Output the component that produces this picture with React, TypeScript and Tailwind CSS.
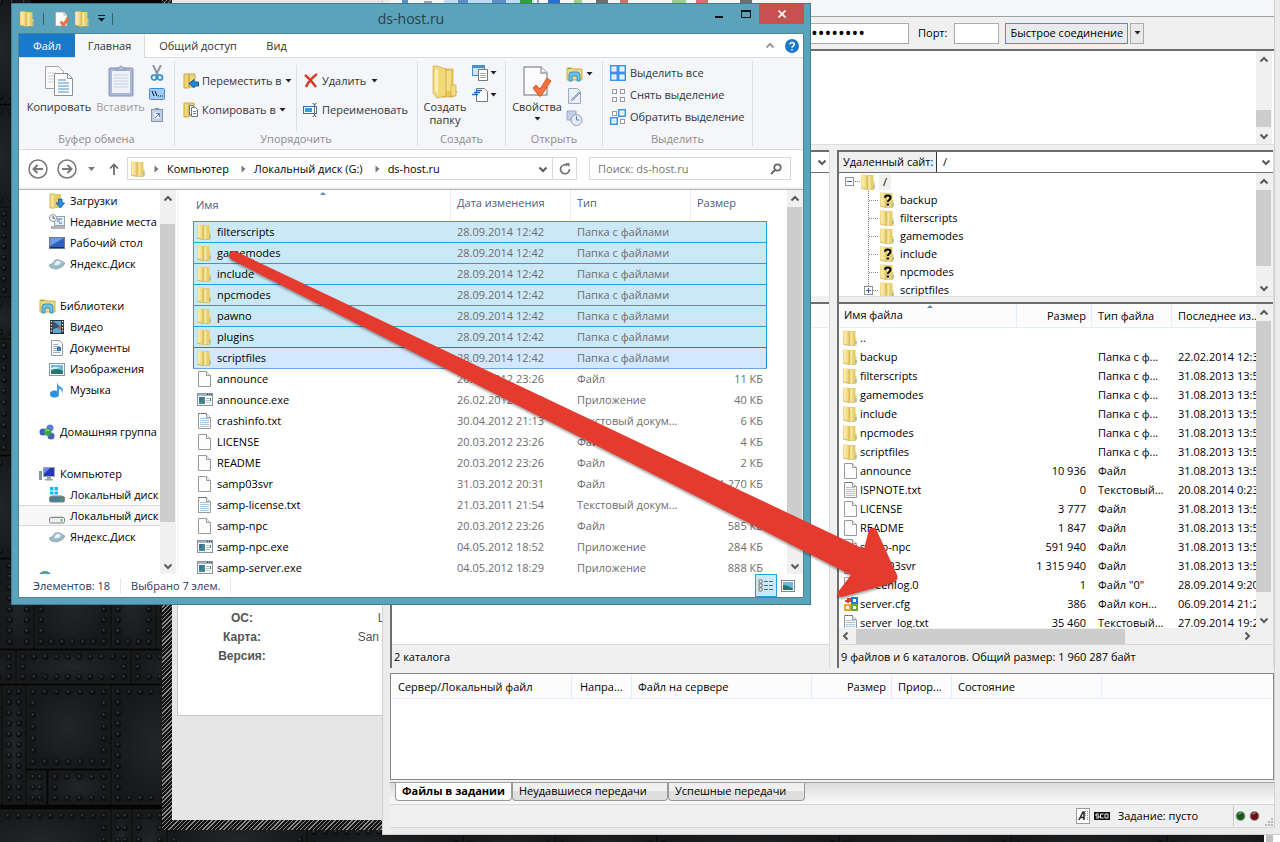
import React from 'react';
import clsx from 'clsx';

/* ---------- data ---------- */

type IconKind = 'folder' | 'file' | 'text' | 'exe' | 'cfg';

interface LocalFile {
  name: string;
  date: string;
  type: string;
  size: string;
  icon: IconKind;
}

const localFiles: LocalFile[] = [
  ...['filterscripts', 'gamemodes', 'include', 'npcmodes', 'pawno', 'plugins', 'scriptfiles'].map((name) => ({
    name,
    date: '28.09.2014 12:42',
    type: 'Папка с файлами',
    size: '',
    icon: 'folder' as IconKind,
  })),
  { name: 'announce', date: '20.03.2012 23:26', type: 'Файл', size: '11 КБ', icon: 'file' },
  { name: 'announce.exe', date: '26.02.2012 19:50', type: 'Приложение', size: '40 КБ', icon: 'exe' },
  { name: 'crashinfo.txt', date: '30.04.2012 21:13', type: 'Текстовый докум...', size: '6 КБ', icon: 'text' },
  { name: 'LICENSE', date: '20.03.2012 23:26', type: 'Файл', size: '4 КБ', icon: 'file' },
  { name: 'README', date: '20.03.2012 23:26', type: 'Файл', size: '2 КБ', icon: 'file' },
  { name: 'samp03svr', date: '31.03.2012 20:31', type: 'Файл', size: '1 270 КБ', icon: 'file' },
  { name: 'samp-license.txt', date: '21.03.2011 21:54', type: 'Текстовый докум...', size: '12 КБ', icon: 'text' },
  { name: 'samp-npc', date: '20.03.2012 23:26', type: 'Файл', size: '585 КБ', icon: 'file' },
  { name: 'samp-npc.exe', date: '04.05.2012 18:52', type: 'Приложение', size: '284 КБ', icon: 'exe' },
  { name: 'samp-server.exe', date: '04.05.2012 18:29', type: 'Приложение', size: '888 КБ', icon: 'exe' },
];

const remoteFiles: [string, string, string, string, IconKind][] = [
  ['..', '', '', '', 'folder'],
  ['backup', '', 'Папка с ф...', '22.02.2014 12:34', 'folder'],
  ['filterscripts', '', 'Папка с ф...', '31.08.2013 13:54', 'folder'],
  ['gamemodes', '', 'Папка с ф...', '31.08.2013 13:54', 'folder'],
  ['include', '', 'Папка с ф...', '31.08.2013 13:54', 'folder'],
  ['npcmodes', '', 'Папка с ф...', '31.08.2013 13:54', 'folder'],
  ['scriptfiles', '', 'Папка с ф...', '31.08.2013 13:54', 'folder'],
  ['announce', '10 936', 'Файл', '31.08.2013 13:54', 'file'],
  ['ISPNOTE.txt', '0', 'Текстовый...', '20.08.2014 0:23', 'text'],
  ['LICENSE', '3 777', 'Файл', '31.08.2013 13:54', 'file'],
  ['README', '1 847', 'Файл', '31.08.2013 13:54', 'file'],
  ['samp-npc', '591 940', 'Файл', '31.08.2013 13:54', 'file'],
  ['samp03svr', '1 315 940', 'Файл', '31.08.2013 13:54', 'file'],
  ['screenlog.0', '1', 'Файл "0"', '28.09.2014 9:20', 'file'],
  ['server.cfg', '386', 'Файл кон...', '06.09.2014 21:24', 'cfg'],
  ['server_log.txt', '35 460', 'Текстовый...', '27.09.2014 19:21', 'text'],
];

// x, y, width, height of the metal plates on the wallpaper
const plates: number[][] = [
  [-30, -4, 60, 107], [-30, 106, 60, 100], [-30, 208, 40, 88], [-30, 298, 60, 40],
  [-30, 340, 40, 114], [-30, 457, 60, 100], [-30, 560, 33, 88],
  [4, 560, 29, 88], [35, 560, 75, 88], [112, 560, 43, 88], [157, 560, 60, 88],
  [-40, 651, 55, 32], [17, 651, 113, 32], [132, 651, 90, 32],
  [-20, 686, 21, 118], [3, 686, 22, 118], [27, 686, 83, 82], [112, 686, 90, 118],
  [27, 771, 19, 33], [49, 771, 61, 33],
  [-30, 810, 140, 60], [112, 810, 19, 60], [133, 810, 33, 60], [168, 810, 138, 60],
  [308, 826, 154, 60], [464, 826, 90, 60], [556, 826, 100, 60], [658, 826, 180, 60],
  [840, 826, 170, 60], [1012, 826, 154, 60], [1168, 826, 100, 60],
];

/* ---------- icons ---------- */

const FolderIcon = ({ question = false }: { question?: boolean }) => (
  <svg width="16" height="16" viewBox="0 0 16 16" className="shrink-0">
    <path d="M6 1h6.500v14H6z" fill="#e6cd69" />
    <path d="M6.500 2h3v13h-3z" fill="#f5e6a0" />
    <path d="M0 .5h5.500L7.500 2v14L0 14z" fill="#f0d983" />
    <path d="M1 1h2.500v13L1 13.500z" fill="#f8e9a8" />
    <path d="M5.500 1l1.500 1v13l-1.500-.5z" fill="#d9bb58" />
    <path d="M10.500 8H13.500v7h-3z" fill="#ebce66" />
    <path d="M0 14l7.500 2 6-1" stroke="#c9a640" strokeWidth=".7" fill="none" />
    <path d="M12.500 11h1v3h-1z" fill="#5ab0e6" />
    {question && (
      <path d="M5 5.800c0-3 5.500-3 5.500 0 0 2-2.600 2-2.600 4.200M6.800 12.400h2.200" stroke="#000" strokeWidth="2" fill="none" />
    )}
  </svg>
);

const FileIcon = ({ lines = false }: { lines?: boolean }) => (
  <svg width="16" height="16" viewBox="0 0 16 16" className="shrink-0">
    <path d="M1.500.5h8l4 4v11h-12z" fill="#fdfdfd" stroke="#9a9a9a" />
    <path d="M9.500.5v4h4" fill="#eee" stroke="#9a9a9a" />
    {lines && <path d="M3 5.500h9M3 7.500h9M3 9.500h9M3 11.500h9M3 13.500h9" stroke="#a9c6da" />}
    {lines && <path d="M2 .5h8" stroke="#555" strokeDasharray="1 1" />}
  </svg>
);

const ExeIcon = () => (
  <svg width="16" height="16" viewBox="0 0 16 16" className="shrink-0">
    <rect x=".5" y="1.500" width="15" height="12" fill="#fff" stroke="#8593a3" />
    <path d="M1 3h14" stroke="#a9b5c3" strokeWidth="2" />
    <path d="M10 2.500h1M12 2.500h1M14 2.500h1" stroke="#333" />
    <rect x="2" y="5" width="6" height="7" fill="#3f8a86" />
    <rect x="2" y="5" width="3" height="4" fill="#3f68a4" />
    <path d="M9 6.500h4M9 8.500h4M9 10.500h4" stroke="#b5bfc9" />
    <path d="M13.500 6v3" stroke="#2a9a60" />
  </svg>
);

const CfgIcon = () => (
  <svg width="16" height="16" viewBox="0 0 16 16" className="shrink-0" fill="none" strokeWidth="2">
    <path d="M2 5h5V2M5 2v5" stroke="#d8432a" />
    <path d="M9 2h5v5H9z" stroke="#2f78c4" />
    <path d="M2 9h5v5H2z" stroke="#e9a81e" />
    <path d="M9 9h5v5H9z" stroke="#6ea82c" />
  </svg>
);

const KindIcon = ({ kind }: { kind: IconKind }) => {
  if (kind === 'folder') return <FolderIcon />;
  if (kind === 'exe') return <ExeIcon />;
  if (kind === 'cfg') return <CfgIcon />;
  return <FileIcon lines={kind === 'text'} />;
};

const Caret = () => (
  <svg width="7" height="4" viewBox="0 0 7 4" className="shrink-0">
    <path d="M.5 0h6L3.500 3.500z" fill="#222" />
  </svg>
);

const chevrons = {
  up: 'M1.500 6.500L5 3l3.500 3.500',
  down: 'M1.500 3.500L5 7l3.500-3.500',
  left: 'M6.500 1.500L3 5l3.500 3.500',
  right: 'M3.500 1.500L7 5 3.500 8.500',
};

const Chevron = ({ dir, light = false }: { dir: keyof typeof chevrons; light?: boolean }) => (
  <svg width="10" height="10" viewBox="0 0 10 10" fill="none" className="shrink-0">
    <path d={chevrons[dir]} stroke={light ? '#999' : '#5a5a5a'} strokeWidth="2" />
  </svg>
);

const Crumb = () => (
  <svg width="5" height="8" viewBox="0 0 5 8" className="shrink-0">
    <path d="M.5 0.500v7L4.500 4z" fill="#777" />
  </svg>
);

const CheckPage = ({ size }: { size: number }) => (
  <svg width={size} height={size} viewBox="0 0 32 32" className="shrink-0">
    <path d="M3 2h17l6 6v22H3z" fill="#fcfcfd" stroke="#9a9ca0" strokeWidth="1.400" />
    <path d="M20 2v6h6" fill="#eef0f2" stroke="#9a9ca0" strokeWidth="1.400" />
    <path d="M12 23l3-3 4 4 7-11 4 3-10 15h-2z" fill="#ef7440" stroke="#d85a28" />
  </svg>
);

const LibraryIcon = () => (
  <svg width="17" height="16" viewBox="0 0 17 16" className="shrink-0">
    <path d="M1 2h5l1 1h9v11H1z" fill="#f0d780" stroke="#d1ae4c" />
    <path d="M2 2.500h3" stroke="#5cb43c" />
    <path d="M3 15V9q0-3 3-3h5q3 0 3 3v6h-3v-5H6v5z" fill="#6cc0e8" stroke="#3b93c4" />
  </svg>
);

const DownloadsIcon = () => (
  <svg width="17" height="16" viewBox="0 0 17 16" className="shrink-0">
    <path d="M1 1h5v14H1z" fill="#f6e394" stroke="#d3b24f" />
    <path d="M6 1h6v14H6z" fill="#e7cb68" />
    <path d="M9.500 6h3.500v4h2.500L11.300 15 7 10h2.500z" fill="#2f8fdc" stroke="#1a6bb0" />
  </svg>
);

const RecentIcon = () => (
  <svg width="17" height="16" viewBox="0 0 17 16" className="shrink-0">
    <rect x="5.500" y="2.500" width="10" height="9" fill="#e8eef2" stroke="#97a3ad" />
    <path d="M8 5h5M8 7h3M10 9h3" stroke="#3b82b8" />
    <path d="M2 12h14v3H2z" fill="#aeb4b9" />
    <circle cx="4" cy="4" r="3.500" fill="#f8fafb" stroke="#8a97a3" />
    <path d="M4 2v2.200h2" stroke="#555" fill="none" />
  </svg>
);

const DesktopIcon = () => (
  <svg width="17" height="16" viewBox="0 0 17 16" className="shrink-0">
    <rect x=".5" y="2.500" width="15" height="11" fill="#2f60c4" stroke="#6d7a8c" />
    <path d="M1 3h14L1 11z" fill="#6a9be8" />
    <path d="M1 12.500h14" stroke="#17305e" />
  </svg>
);

const DiskCloudIcon = () => (
  <svg width="17" height="16" viewBox="0 0 17 16" className="shrink-0">
    <path d="M0 9q4-1 6-5 3-1 5 0l5 3q-1 4-8 6-7 0-8-4z" fill="#9dbac8" stroke="#7f9dab" strokeWidth=".6" />
    <path d="M5 9q2-5 5-4 3 1 1 3-3 2-6 1z" fill="#e6f1f5" />
  </svg>
);

const VideoIcon = () => (
  <svg width="17" height="16" viewBox="0 0 17 16" className="shrink-0">
    <rect x="1" y="1" width="14" height="14" fill="#2c3136" />
    <path d="M2.500 2v12M13.500 2v12" stroke="#d8dde0" strokeWidth="1.500" strokeDasharray="1.500 1.500" />
    <rect x="4" y="2" width="8" height="12" fill="#5aa6d8" />
    <path d="M4 2l8 6-8 2z" fill="#3a5068" />
    <path d="M12 6v5l-4-2z" fill="#b06a3a" />
  </svg>
);

const DocsIcon = () => (
  <svg width="17" height="16" viewBox="0 0 17 16" className="shrink-0">
    <path d="M2.500.5h8l3 3v12h-11z" fill="#fdfdfd" stroke="#8f9aa5" />
    <path d="M4 4.500h5M4 6.500h7M4 8.500h4M4 10.500h4M4 12.500h7" stroke="#9ab0c4" />
    <path d="M8 7h4v4H8z" fill="#3b78b8" />
  </svg>
);

const PictureIcon = () => (
  <svg width="17" height="16" viewBox="0 0 17 16" className="shrink-0">
    <rect x=".5" y="2.500" width="15" height="12" fill="#fff" stroke="#8a97a3" />
    <rect x="2" y="4" width="12" height="9" fill="#6fb8e6" />
    <path d="M2 10q5-4 12 0v3H2z" fill="#23796a" />
    <path d="M2 7q5-2 9 0-4 1-9 1z" fill="#e8f4fa" />
  </svg>
);

const MusicIcon = () => (
  <svg width="17" height="16" viewBox="0 0 17 16" className="shrink-0">
    <ellipse cx="5.500" cy="12" rx="4.500" ry="3.500" fill="#2d90d8" />
    <path d="M8 12V0q1 4 4 5t1 7q0-5-3-5v5z" fill="#3f9fe0" />
  </svg>
);

const HomegroupIcon = () => (
  <svg width="17" height="16" viewBox="0 0 17 16" className="shrink-0">
    <circle cx="4" cy="8" r="3.500" fill="#3e5fc8" />
    <circle cx="11" cy="4" r="3.500" fill="#5d7fdc" />
    <circle cx="12" cy="12" r="3.500" fill="#4a62b8" />
    <circle cx="8.500" cy="8" r="3.700" fill="#3da648" />
    <path d="M6.500 7q2-2 3.500-.5" stroke="#c8f0c8" fill="none" />
  </svg>
);

const ComputerIcon = () => (
  <svg width="17" height="16" viewBox="0 0 17 16" className="shrink-0">
    <rect x="4.500" y="1.500" width="11" height="9" fill="#2337b8" stroke="#a0a7ae" />
    <path d="M5 2h6L5 8z" fill="#6c8af0" />
    <path d="M8 11h4v2h2v1.500H6V13h2z" fill="#9aa1a8" />
    <rect x="0" y="5" width="3" height="9" fill="#8c959d" />
    <path d="M1 6v3" stroke="#54c04a" />
  </svg>
);

const DriveIcon = ({ system = false }: { system?: boolean }) => (
  <svg width="17" height="16" viewBox="0 0 17 16" className="shrink-0">
    {system && <path d="M1 0h3.500v3.500H1zM5.500 0H9v3.500H5.500zM1 4.500h3.500v3H1zM5.500 4.500H9v3H5.500z" fill="#12b7f0" />}
    <path d="M3 8h10l3 3H0z" fill={system ? '#b9c0c6' : '#dcdcdc'} />
    <rect x=".5" y="9.500" width="15" height="5.500" rx="1.500" fill={system ? '#4c7f94' : '#efefef'} stroke="#7f858a" />
    <path d="M12.500 11v2.500" stroke="#49b33f" strokeWidth="1.500" />
  </svg>
);

const GlobeIcon = () => (
  <svg width="17" height="16" viewBox="0 0 17 16" className="shrink-0">
    <circle cx="6" cy="7" r="7" fill="#3d8fd0" />
    <path d="M3 2q3-2 5 0l-2 3z" fill="#56b85a" />
  </svg>
);

const SquaresIcon = ({ mode }: { mode: 'all' | 'none' | 'invert' }) => (
  <svg width="16" height="16" viewBox="0 0 16 16" className="shrink-0">
    {[[0, 0], [8, 0], [0, 8], [8, 8]].map(([x, y], i) => {
      const on = mode === 'all' || (mode === 'invert' && (i === 1 || i === 2));
      return on ? (
        <g key={i}>
          <rect x={x} y={y} width="8" height="8" fill="#3b94ec" />
          <rect x={x + 2} y={y + 2} width="4" height="4" fill="#d3e8fc" stroke="#fff" />
        </g>
      ) : (
        <rect key={i} x={x + 2.5} y={y + 2.5} width="4" height="4" fill="#fff" stroke="#999" />
      );
    })}
  </svg>
);

/* ---------- shared parts ---------- */

const VScroll = ({ thumb }: { thumb: string }) => (
  <div className="flex w-4 shrink-0 flex-col bg-[#f0f0f0]">
    <button type="button" aria-label="Вверх" className="flex h-[17px] shrink-0 items-center justify-center">
      <Chevron dir="up" />
    </button>
    <div className={clsx('mr-px bg-[#cdcdcd]', thumb)} />
    <button type="button" aria-label="Вниз" className="mt-auto flex h-[17px] shrink-0 items-center justify-center">
      <Chevron dir="down" />
    </button>
  </div>
);

const Wallpaper = () => (
  <svg className="absolute inset-0 h-full w-full" aria-hidden="true">
    <defs>
      <radialGradient id="plate">
        <stop offset="0" stopColor="#232628" />
        <stop offset="1" stopColor="#16181a" />
      </radialGradient>
    </defs>
    <rect width="100%" height="100%" fill="#050505" />
    {plates.map(([x, y, w, h], i) => {
      const nx = Math.max(1, Math.round((w - 13) / 11));
      const ny = Math.max(1, Math.round((h - 13) / 11));
      const dots: number[][] = [];
      for (let k = 0; k <= nx; k++) {
        const cx = x + 6 + (k * (w - 12)) / nx;
        dots.push([cx, y + 6], [cx, y + h - 6]);
      }
      for (let k = 1; k < ny; k++) {
        const cy = y + 6 + (k * (h - 12)) / ny;
        dots.push([x + 6, cy], [x + w - 6, cy]);
      }
      return (
        <g key={i}>
          <rect x={x} y={y} width={w} height={h} fill="url(#plate)" stroke="#1c1e1f" strokeWidth="1" />
          {dots.map(([cx, cy], k) => (
            <g key={k}>
              <circle cx={cx} cy={cy} r="3" fill="#0d0e0f" />
              <circle cx={cx - 0.3} cy={cy - 0.5} r="1.8" fill="#1d2022" />
              <circle cx={cx - 0.5} cy={cy - 1} r=".8" fill="#45494b" />
            </g>
          ))}
        </g>
      );
    })}
  </svg>
);

const BrowserPage = () => (
  <div className="absolute left-[162px] right-4 top-0 bg-[repeating-linear-gradient(135deg,#8c8c8c_0px,#8c8c8c_1px,#141414_1px,#141414_3px)] pb-2.5 pl-2.5">
    <div className="bg-[#e6e6e6] pb-[104px] pl-[5px] pt-[30px]">
      <dl className="grid grid-cols-[128px_172px] border border-[#c8c8c8] bg-white pb-[49px] pt-[578px] text-center font-['Liberation_Sans',sans-serif] text-xs leading-[19px] text-[#555]">
        <dt className="font-bold">ОС:</dt>
        <dd>Linux</dd>
        <dt className="font-bold">Карта:</dt>
        <dd>San Andreas</dd>
        <dt className="font-bold">Версия:</dt>
        <dd />
      </dl>
    </div>
  </div>
);

/* ---------- ftp client ---------- */

const tree: [string, boolean][] = [
  ['backup', true],
  ['filterscripts', false],
  ['gamemodes', false],
  ['include', true],
  ['npcmodes', true],
  ['scriptfiles', false],
];

const RemoteTree = () => (
  <div className="flex h-[123px] overflow-hidden bg-white">
    <ul className="flex-1 pl-1.5">
      <li className="flex h-[18px] items-center">
        <svg width="16" height="10" viewBox="0 0 16 10" className="shrink-0">
          <rect x=".5" y=".5" width="8" height="8" fill="#fff" stroke="#919191" />
          <path d="M2 4.500h5" stroke="#3b5ba8" />
          <path d="M10 4.500h6" stroke="#888" strokeDasharray="1 1" />
        </svg>
        <FolderIcon />
        <span className="ml-0.5 bg-[#f0f0f0] px-1">/</span>
      </li>
      {tree.map(([name, question], i) => {
        const last = i === tree.length - 1;
        return (
          <li key={name} className="flex h-[18px] items-center pl-[18px]">
            <svg width="17" height="18" viewBox="0 0 17 18" className="shrink-0">
              <path d={last ? 'M5.500 0v6' : 'M5.500 0v18'} stroke="#888" strokeDasharray="1 1" />
              <path d="M6 9.500h10" stroke="#888" strokeDasharray="1 1" />
              {last && <rect x="1.500" y="5.500" width="8" height="8" fill="#fff" stroke="#919191" />}
              {last && <path d="M3 9.500h5M5.500 7v5" stroke="#3b5ba8" />}
            </svg>
            <FolderIcon question={question} />
            <span className="ml-1">{name}</span>
          </li>
        );
      })}
    </ul>
    <VScroll thumb="h-[76px]" />
  </div>
);

const RemoteList = () => (
  <div className="flex h-[324px] overflow-hidden bg-white">
    <div className="min-w-0 flex-1">
      <table className="w-full table-fixed border-separate border-spacing-0 whitespace-nowrap text-left">
        <colgroup>
          <col />
          <col className="w-[75px]" />
          <col className="w-20" />
          <col className="w-[84px]" />
        </colgroup>
        <thead>
          <tr className="h-6 bg-[#fcfcfc]">
            <th className="border-b border-r border-[#e3eefa] p-0 pl-[5px] font-normal">
              <div className="flex flex-col">
                <svg width="6" height="3" viewBox="0 0 6 3" className="self-center"><path d="M0 3h6L3 0z" fill="#5a8cab" /></svg>
                <span className="-mt-px pb-1">Имя файла</span>
              </div>
            </th>
            <th className="border-b border-r border-[#e3eefa] p-0 pr-[5px] text-right font-normal">Размер</th>
            <th className="border-b border-r border-[#e3eefa] p-0 pl-1.5 font-normal">Тип файла</th>
            <th className="overflow-hidden border-b border-[#e3eefa] p-0 pl-1.5 font-normal">Последнее из...</th>
          </tr>
        </thead>
        <tbody>
          {remoteFiles.map(([name, size, type, date, icon]) => (
            <tr key={name} className="h-[19px]">
              <td className="p-0 pl-1">
                <div className="flex h-[19px] items-center gap-px">
                  <KindIcon kind={icon} />
                  <span>{name}</span>
                </div>
              </td>
              <td className="p-0 pr-1.5 text-right">{size}</td>
              <td className="p-0 pl-1.5">{type}</td>
              <td className="overflow-hidden p-0 pl-1.5">{date}</td>
            </tr>
          ))}
        </tbody>
      </table>
    </div>
    <VScroll thumb="h-[271px]" />
  </div>
);

const FtpClient = () => (
  <div className="absolute left-[382px] right-0 top-0 border-b border-l border-[#d0d0d0] bg-[#ebebeb] pb-1.5 pl-[7px] pr-[5px] font-['Open_Sans',sans-serif] text-[11px] leading-4 text-black">
    <div className="border-r border-[#d0d0d0] bg-[#f0f0f0]">
      {/* toolbar, mostly covered by the window in front */}
      <div className="h-[17px] border-b border-[#a0a0a0] bg-[#f4f6f9]">
        <svg width="380" height="4" viewBox="0 0 380 4">
          <path d="M54 0h90v4H54z" fill="#bfdcf5" />
          <path d="M34 2h8M148 0v3" stroke="#555" />
          <path d="M12 0h6v4h-6zM68 0h10v4H68zM102 0h14v4h-14z" fill="#5b8fc9" />
          <path d="M130 0h12v3h-12z" fill="#2fa32f" />
          <path d="M158 0h12v3h-12z" fill="#2c6fd0" />
          <path d="M184 0h8v4h-8zM282 0h14v4h-14z" fill="#9ad08c" />
          <path d="M206 0h12v4h-12zM350 0h12v4h-12z" fill="#6e6e6e" />
          <path d="M230 0h8v4h-8zM306 0h12v4h-12z" fill="#d9706a" />
        </svg>
      </div>
      <form className="flex h-8 items-center pl-[416px]">
        <input
          type="password"
          aria-label="Пароль"
          defaultValue="xxxxxxxx"
          className="h-[21px] w-[103px] border border-[#ababab] bg-white pl-1 text-lg leading-[19px]"
        />
        <label htmlFor="port" className="ml-[9px]">Порт:</label>
        <input id="port" className="ml-[7px] h-[21px] w-[45px] border border-[#ababab] bg-white" />
        <button type="button" className="ml-1.5 h-[21px] w-[123px] whitespace-nowrap border border-[#4a90e2] bg-[#e9e9e9]">
          Быстрое соединение
        </button>
        <button type="button" aria-label="История соединений" className="ml-0.5 flex h-[21px] w-3.5 items-center justify-center border border-[#ababab] bg-[#e9e9e9]">
          <Caret />
        </button>
      </form>
      <div className="flex h-24 justify-end border-b border-t-2 border-b-[#dcdcdc] border-t-[#6e6e6e] bg-white pr-0.5">
        <VScroll thumb="mt-[42px] h-[17px]" />
      </div>

      <div className="mt-[5px] flex gap-[7px]">
        {/* local side */}
        <div className="flex w-[440px] shrink-0 flex-col border-l-2 border-r border-l-[#6e6e6e] border-r-[#dcdcdc]">
          <div className="flex h-[23px] items-center justify-end border-b border-t-2 border-[#6e6e6e] bg-white pr-0.5">
            <Chevron dir="down" />
          </div>
          <div className="h-[123px] bg-white" />
          <div className="mt-1.5 h-[26px] border-b border-t-2 border-b-[#e3eefa] border-t-[#6e6e6e] bg-[#fcfcfc]" />
          <div className="flex-1 bg-white" />
          <div className="flex h-6 items-center border-t border-[#d8d8d8] pl-0.5">2 каталога</div>
        </div>
        {/* remote side */}
        <div className="min-w-0 flex-1 border-l-2 border-r border-l-[#6e6e6e] border-r-[#dcdcdc]">
          <div className="flex h-[23px] border-b border-t-2 border-[#6e6e6e] bg-white">
            <label htmlFor="remote" className="flex w-[98px] shrink-0 items-center whitespace-nowrap border-r border-[#333] bg-[#f0f0f0] pl-1">
              Удаленный сайт:
            </label>
            <select id="remote" className="min-w-0 flex-1 appearance-none pl-1.5">
              <option>/</option>
            </select>
            <span className="flex items-center pr-0.5">
              <Chevron dir="down" />
            </span>
          </div>
          <div className="border-b border-[#dcdcdc] pr-px">
            <RemoteTree />
          </div>
          <div className="mt-[5px] border-t-2 border-[#6e6e6e] pr-px">
            <RemoteList />
          </div>
          <div className="flex h-4 items-center bg-[#f0f0f0] pl-0.5">
            <Chevron dir="left" />
            <div className="ml-[5px] h-[15px] w-[269px] bg-[#cdcdcd]" />
            <span className="ml-auto mr-[21px] flex">
              <Chevron dir="right" />
            </span>
          </div>
          <div className="flex h-6 items-center border-t border-[#d8d8d8] pl-0.5">
            9 файлов и 6 каталогов. Общий размер: 1 960 287 байт
          </div>
        </div>
      </div>

      {/* transfer queue */}
      <div className="mt-[5px] h-[107px] border border-[#828790] bg-white p-px">
        <table className="w-full table-fixed border-separate border-spacing-0 text-left">
          <colgroup>
            <col className="w-[180px]" />
            <col className="w-[60px]" />
            <col className="w-[180px]" />
            <col className="w-20" />
            <col className="w-[60px]" />
            <col className="w-[150px]" />
            <col />
          </colgroup>
          <thead>
            <tr className="h-6 whitespace-nowrap bg-[#fcfcfc]">
              <th className="border-b border-r border-[#e3eefa] pl-1.5 font-normal">Сервер/Локальный файл</th>
              <th className="border-b border-r border-[#e3eefa] pl-2 font-normal">Напра...</th>
              <th className="border-b border-r border-[#e3eefa] pl-1.5 font-normal">Файл на сервере</th>
              <th className="border-b border-r border-[#e3eefa] pr-[5px] text-right font-normal">Размер</th>
              <th className="border-b border-r border-[#e3eefa] pl-1.5 font-normal">Приор...</th>
              <th className="border-b border-r border-[#e3eefa] pl-1.5 font-normal">Состояние</th>
              <th className="border-b border-[#e3eefa]" />
            </tr>
          </thead>
        </table>
      </div>
      <div className="mt-0.5 flex h-[22px] border-t border-[#a0a0a0] bg-gradient-to-b from-[#dcdcdc] to-[#fafafa] pl-[5px]">
        <button type="button" className="h-[18px] w-[117px] whitespace-nowrap rounded-b border border-t-0 border-[#999] bg-white pb-1 font-bold">
          Файлы в задании
        </button>
        <button type="button" className="h-[18px] w-[156px] rounded-b border border-t-0 border-[#999] bg-gradient-to-b from-[#f0f0f0] from-50% to-[#dfdfdf] to-50% pb-1 pl-1.5 text-left">
          Неудавшиеся передачи
        </button>
        <button type="button" className="h-[18px] w-[137px] rounded-b border border-t-0 border-[#999] bg-gradient-to-b from-[#f0f0f0] from-50% to-[#dfdfdf] to-50% pb-1 pl-1.5 text-left">
          Успешные передачи
        </button>
      </div>
      <div className="flex h-6 items-center justify-end border-b border-t border-[#d5d5d5]">
        <svg width="14" height="16" viewBox="0 0 14 16">
          <rect x=".5" y=".5" width="13" height="15" fill="#fff" stroke="#9a9a9a" />
          <path d="M3 12L7 4h1v8M5 9.500h3" stroke="#222" strokeWidth="1.500" fill="none" />
          <path d="M9.500 3v6M11.500 3v9" stroke="#888" strokeDasharray="1 1" />
        </svg>
        <svg width="16" height="8" viewBox="0 0 16 8" className="ml-1">
          <rect width="16" height="8" fill="#111" />
          <path d="M5 2H2v2h3v2H2M9.500 2h-3v4h3M11 2h3v4h-3V2" stroke="#eee" fill="none" />
        </svg>
        <span className="ml-2">Задание: пусто</span>
        <svg width="41" height="20" viewBox="0 0 41 20" className="ml-[35px]">
          <path d="M.5 0v20" stroke="#c4c4c4" />
          <circle cx="7.500" cy="10" r="4.500" fill="#155a18" stroke="#a5a5a5" />
          <circle cx="21.500" cy="10" r="4.500" fill="#6e0d12" stroke="#a5a5a5" />
          <path d="M5.500 8.500q1-2 3-1.500M19.500 8.500q1-2 3-1.500" stroke="#b9c7b9" fill="none" />
          <path d="M38 12h2v2h-2zM35 15h2v2h-2zM38 15h2v2h-2zM32 18h2v2h-2zM35 18h2v2h-2zM38 18h2v2h-2z" fill="#b5b5b5" />
        </svg>
      </div>
    </div>
  </div>
);

/* ---------- explorer window ---------- */

const TitleBar = () => (
  <div className="grid h-[29px] grid-cols-[1fr_auto_1fr]">
    <div className="flex items-center gap-[5px] pl-0.5">
      <FolderIcon />
      <span className="ml-0.5 h-3 w-px bg-[#36606e]" />
      <span className="ml-[5px] flex">
        <CheckPage size={16} />
      </span>
      <FolderIcon />
      <svg width="7" height="7" viewBox="0 0 7 7" className="ml-0.5">
        <path d="M0 .5h7" stroke="#111" />
        <path d="M0 3h7L3.500 6.500z" fill="#111" />
      </svg>
      <span className="ml-0.5 h-3 w-px bg-[#36606e]" />
    </div>
    <h1 className="self-center text-sm text-[#2d4048]">ds-host.ru</h1>
    <div className="flex items-start justify-end">
      <button type="button" aria-label="Свернуть" className="flex h-5 w-7 items-center justify-center">
        <svg width="8" height="10" viewBox="0 0 8 10"><path d="M0 8h8" stroke="#111" strokeWidth="2" /></svg>
      </button>
      <button type="button" aria-label="Развернуть" className="flex h-5 w-[26px] items-center justify-center">
        <svg width="10" height="8" viewBox="0 0 10 8"><path d="M.5 1h9v6.500h-9z" fill="none" stroke="#111" /><path d="M0 1h10" stroke="#111" strokeWidth="2" /></svg>
      </button>
      <button type="button" aria-label="Закрыть" className="flex h-5 w-[45px] items-center justify-center bg-[#c75050]">
        <svg width="8" height="8" viewBox="0 0 8 8"><path d="M.5 .5l7 7M7.500 .5l-7 7" stroke="#fff" strokeWidth="1.700" /></svg>
      </button>
    </div>
  </div>
);

const RibbonGroup = ({ title, className, children }: { title: string; className: string; children: React.ReactNode }) => (
  <section className={clsx('my-[3px] flex flex-col border-r border-[#dedfe1]', className)}>
    <div className="flex flex-1 pt-1">{children}</div>
    <h2 className="h-[15px] text-center text-[#8c8c8c]">{title}</h2>
  </section>
);

const Ribbon = () => (
  <div className="flex h-[92px] border-b border-[#dadbdc] bg-[#f4f6f9] text-[#333]">
    <RibbonGroup title="Буфер обмена" className="w-[156px]">
      <button type="button" className="flex w-20 flex-col items-center">
        <svg width="30" height="32" viewBox="0 0 30 32">
          <path d="M1.500 1.500h13l5 5v17h-18z" fill="#fbfbfb" stroke="#a3a3a3" />
          <path d="M4 8h8M4 11h8M4 14h8M4 17h8" stroke="#c9cdd3" />
          <path d="M10.500 8.500h13l5 5v17h-18z" fill="#fdfdfd" stroke="#8f8f8f" />
          <path d="M23.500 8.500v5h5" fill="none" stroke="#8f8f8f" />
          <path d="M14 15h8M14 18h11M14 21h11M14 24h11M14 27h11" stroke="#4a90c8" />
        </svg>
        <span className="mt-0.5">Копировать</span>
      </button>
      <button type="button" className="flex w-[43px] flex-col items-center text-[#9b9b9b]">
        <svg width="26" height="32" viewBox="0 0 26 32">
          <rect x="1" y="3" width="24" height="28" rx="1" fill="#a9b8d4" stroke="#8494b5" />
          <rect x="4" y="6" width="18" height="22" fill="#edf1f8" />
          <path d="M6 10h14M6 13h14M6 16h14M6 19h14M6 22h14" stroke="#c9d4e6" />
          <path d="M8 5V3h3q2-4 4 0h3v2z" fill="#b9c4d8" stroke="#8494b5" />
        </svg>
        <span className="mt-0.5">Вставить</span>
      </button>
      <div className="ml-[7px] flex flex-col items-center gap-1.5">
        <svg width="16" height="17" viewBox="0 0 16 17">
          <path d="M4 0l5 10M12 0L7 10" stroke="#8a96a6" strokeWidth="2" />
          <circle cx="5" cy="12.500" r="2.500" fill="none" stroke="#2a8fd0" strokeWidth="1.700" />
          <circle cx="11" cy="12.500" r="2.500" fill="none" stroke="#2a8fd0" strokeWidth="1.700" />
        </svg>
        <svg width="16" height="13" viewBox="0 0 16 13">
          <rect x=".5" y=".5" width="15" height="11" rx="1" fill="#9fcdf8" stroke="#3d8fdc" />
          <path d="M3 3l2 5M6 3l2 5M9 8h1M11 8h1M13 8h1" stroke="#111" />
        </svg>
        <svg width="14" height="15" viewBox="0 0 14 15">
          <rect x="1.500" y="2.500" width="11" height="12" fill="#c3cfe2" stroke="#8494b5" />
          <path d="M4.500 5.500h5v6h-5z" fill="#f4f7fb" />
          <path d="M5 11l4-4M6 6.500h3.500V10" stroke="#5f76a8" fill="none" />
          <path d="M5 2h4" stroke="#8494b5" strokeWidth="2" />
        </svg>
      </div>
    </RibbonGroup>

    <RibbonGroup title="Упорядочить" className="w-[243px]">
      <div className="flex w-[122px] flex-col gap-[11px] border-r border-[#dedfe1] pl-2 pt-[7px]">
        <button type="button" className="flex h-[18px] items-center gap-[3px] whitespace-nowrap">
          <svg width="16" height="16" viewBox="0 0 16 16" className="shrink-0">
            <path d="M1 1h5v14H1zM6 1h6v13H6z" fill="#efd678" stroke="#cdaa48" />
            <path d="M6 10.500l5-4v2.500h4.500v4H11v2z" fill="#2586d0" stroke="#14609e" />
          </svg>
          Переместить в <Caret />
        </button>
        <button type="button" className="flex h-[18px] items-center gap-[3px] whitespace-nowrap">
          <svg width="16" height="16" viewBox="0 0 16 16" className="shrink-0">
            <path d="M1 1h5v14H1zM6 1h5v13H6z" fill="#efd678" stroke="#cdaa48" />
            <path d="M6.500 3.500h4v9h-4z" fill="#fff" stroke="#777" />
            <path d="M8.500 5.500h4l2 2v7h-6z" fill="#fff" stroke="#777" />
            <path d="M10 9.500h3M10 11.500h3" stroke="#4a90c8" />
          </svg>
          Копировать в <Caret />
        </button>
      </div>
      <div className="flex flex-col gap-[11px] pl-1.5 pt-[7px]">
        <button type="button" className="flex h-[18px] items-center gap-[3px]">
          <svg width="16" height="16" viewBox="0 0 16 16" className="shrink-0">
            <path d="M2 2q5 4 11 12M14 1Q6 7 3 14" stroke="#d23a22" strokeWidth="2.400" fill="none" />
          </svg>
          Удалить <span className="ml-0.5 flex"><Caret /></span>
        </button>
        <button type="button" className="flex h-[18px] items-center gap-[3px]">
          <svg width="16" height="16" viewBox="0 0 16 16" className="shrink-0">
            <rect x=".5" y="4.500" width="13" height="7" fill="#fff" stroke="#3a6ea8" />
            <path d="M2 6h7v4H2z" fill="#3a9ae0" />
            <path d="M9.500 1.500q2 0 2 1.500v10q0 1.500-2 1.500M13.500 1.500q-2 0-2 1.500M11.500 13q0 1.500 2 1.500" stroke="#666" fill="none" />
          </svg>
          Переименовать
        </button>
      </div>
    </RibbonGroup>

    <RibbonGroup title="Создать" className="w-[88px]">
      <button type="button" className="flex w-[54px] flex-col items-center leading-[13px]">
        <svg width="28" height="34" viewBox="0 0 28 34">
          <path d="M13 4h9v20l4 3-4 5H10z" fill="#ecc955" stroke="#c79f35" strokeWidth=".6" />
          <path d="M14 6h6v20h-6z" fill="#f3dd85" />
          <path d="M2 1h4l9 3v27l-9 2-4-5z" fill="#f3d877" stroke="#c79f35" strokeWidth=".6" />
          <path d="M4 4l3 1v24l-3-3z" fill="#fbefb6" />
          <path d="M20 20h5v11h-5z" fill="#f4dc84" stroke="#c79f35" strokeWidth=".6" />
        </svg>
        <span className="mt-px w-12">Создать папку</span>
      </button>
      <div className="flex flex-col gap-1.5">
        <button type="button" aria-label="Создать элемент" className="flex items-center gap-px">
          <svg width="17" height="16" viewBox="0 0 17 16">
            <rect x=".5" y=".5" width="12" height="10" fill="#cfe6f8" stroke="#4a90c8" />
            <path d="M1 2h12" stroke="#4a90c8" strokeWidth="2" />
            <path d="M6.500 4.500h9v11h-9z" fill="#fff" stroke="#777" />
            <path d="M8 8.500h6M8 10.500h6M8 12.500h6" stroke="#aaa" />
          </svg>
          <Caret />
        </button>
        <button type="button" aria-label="Простой доступ" className="flex items-center gap-px">
          <svg width="17" height="16" viewBox="0 0 17 16">
            <path d="M4.500 1.500h8l3 3v10h-11z" fill="#fff" stroke="#777" />
            <path d="M4 3.500h6M2 5.500h6M0 7.500h6" stroke="#1e6fd0" strokeWidth="1.500" />
          </svg>
          <Caret />
        </button>
      </div>
    </RibbonGroup>

    <RibbonGroup title="Открыть" className="w-[97px]">
      <button type="button" className="ml-0.5 flex w-[58px] flex-col items-center gap-0.5">
        <CheckPage size={32} />
        Свойства
        <Caret />
      </button>
      <div className="flex flex-col gap-1.5 pt-px">
        <button type="button" aria-label="Открыть" className="flex items-center gap-[3px]">
          <LibraryIcon />
          <Caret />
        </button>
        <svg width="17" height="16" viewBox="0 0 17 16">
          <path d="M2.500.5h9l3 3v12h-12z" fill="#e9eef7" stroke="#9aaac6" />
          <path d="M5 12l8-8 1 1-7 7z" fill="#a9b8d4" stroke="#8c9cbc" />
        </svg>
        <svg width="17" height="16" viewBox="0 0 17 16">
          <path d="M1 1h9v9H1z" fill="#c3cfe2" stroke="#9aaac6" />
          <circle cx="10.500" cy="10" r="5.500" fill="#e3eaf5" stroke="#8c9cbc" />
          <path d="M10.500 6v4h3" stroke="#6e80a8" fill="none" />
        </svg>
      </div>
    </RibbonGroup>

    <RibbonGroup title="Выделить" className="w-[150px]">
      <div className="flex flex-col gap-1.5 whitespace-nowrap pl-[7px]">
        <button type="button" className="flex items-center gap-1"><SquaresIcon mode="all" />Выделить все</button>
        <button type="button" className="flex items-center gap-1"><SquaresIcon mode="none" />Снять выделение</button>
        <button type="button" className="flex items-center gap-1"><SquaresIcon mode="invert" />Обратить выделение</button>
      </div>
    </RibbonGroup>
  </div>
);

const AddressRow = () => (
  <div className="flex h-[39px] items-center border-b-2 border-[#f2f2f2] pl-[9px] pr-3">
    <button type="button" aria-label="Назад">
      <svg width="20" height="20" viewBox="0 0 20 20" fill="none" stroke="#777">
        <circle cx="10" cy="10" r="9" strokeWidth="1.500" />
        <path d="M5.500 10H15M9.500 6l-4 4 4 4" strokeWidth="2" />
      </svg>
    </button>
    <button type="button" aria-label="Вперед" className="ml-[9px]">
      <svg width="20" height="20" viewBox="0 0 20 20" fill="none" stroke="#777">
        <circle cx="10" cy="10" r="9" strokeWidth="1.500" />
        <path d="M5 10h9.500M10.500 6l4 4-4 4" strokeWidth="2" />
      </svg>
    </button>
    <svg width="7" height="4" viewBox="0 0 7 4" className="ml-[11px]"><path d="M0 0h7L3.500 4z" fill="#777" /></svg>
    <button type="button" aria-label="На уровень вверх" className="ml-[13px]">
      <svg width="12" height="12" viewBox="0 0 12 12" fill="none" stroke="#666" strokeWidth="1.700"><path d="M6 12V1.500M2 5.500l4-4 4 4" /></svg>
    </button>
    <div className="ml-[7px] flex h-[23px] flex-1 items-center border border-[#d9d9d9] pl-[3px]">
      <FolderIcon />
      <span className="ml-[7px]"><Crumb /></span>
      <button type="button" className="ml-2">Компьютер</button>
      <span className="ml-3"><Crumb /></span>
      <button type="button" className="ml-2">Локальный диск (G:)</button>
      <span className="ml-3"><Crumb /></span>
      <button type="button" className="ml-2">ds-host.ru</button>
      <span className="ml-auto mr-1"><Chevron dir="down" /></span>
      <button type="button" aria-label="Обновить" className="flex h-[21px] w-6 items-center justify-center border-l border-[#d9d9d9]">
        <svg width="12" height="12" viewBox="0 0 12 12" fill="none"><path d="M8.500 2.500A4.500 4.500 0 1 0 10.500 6" stroke="#777" strokeWidth="1.700" /><path d="M6.500 0h4v4z" fill="#777" /></svg>
      </button>
    </div>
    <label className="ml-3 flex h-[23px] w-[202px] items-center border border-[#d9d9d9] px-2">
      <input aria-label="Поиск" placeholder="Поиск: ds-host.ru" className="min-w-0 flex-1 outline-none placeholder:text-[#757575]" />
      <svg width="12" height="12" viewBox="0 0 12 12" fill="none" stroke="#666"><circle cx="7.500" cy="4.500" r="3.200" strokeWidth="1.700" /><path d="M5 7l-4 4" strokeWidth="2" /></svg>
    </label>
  </div>
);

const sideItems: ([React.ReactNode, string, number] | null)[] = [
  [<DownloadsIcon />, 'Загрузки', 1],
  [<RecentIcon />, 'Недавние места', 1],
  [<DesktopIcon />, 'Рабочий стол', 1],
  [<DiskCloudIcon />, 'Яндекс.Диск', 1],
  null,
  [<LibraryIcon />, 'Библиотеки', 0],
  [<VideoIcon />, 'Видео', 1],
  [<DocsIcon />, 'Документы', 1],
  [<PictureIcon />, 'Изображения', 1],
  [<MusicIcon />, 'Музыка', 1],
  null,
  [<HomegroupIcon />, 'Домашняя группа', 0],
  null,
  [<ComputerIcon />, 'Компьютер', 0],
  [<DriveIcon system />, 'Локальный диск (C:)', 1],
  [<DriveIcon />, 'Локальный диск (G:)', 1],
  [<DiskCloudIcon />, 'Яндекс.Диск', 1],
  null,
  [<GlobeIcon />, '', 0],
];

const Sidebar = () => (
  <nav className="flex w-[159px] shrink-0 border-r border-[#f0f0f0]">
    <ul className="w-[141px] overflow-hidden whitespace-nowrap">
      {sideItems.map((item, i) => (
        <li
          key={i}
          className={clsx(
            'flex h-[21px] items-center gap-1 border-y',
            i === 15 ? 'border-[#d9d9d9] bg-[#f7f7f7]' : 'border-transparent',
            item && item[2] === 1 ? 'pl-[30px]' : 'pl-5',
          )}
        >
          {item && item[0]}
          {item && <span>{item[1]}</span>}
        </li>
      ))}
    </ul>
    <VScroll thumb="mt-[17px] h-[298px]" />
  </nav>
);

// the row under the selection carries its closing line
const rowClass = (i: number) => {
  if (i < 6) return 'bg-[#cbe8f6] [&>td]:border-[#26a0da]';
  if (i === 6) return 'bg-[#d1e8ff] [&>td]:border-[#1883d7]';
  if (i === 7) return '[&>td]:border-[#66a7e8]';
  return '[&>td]:border-transparent';
};

const FileTable = () => (
  <div className="min-w-0 flex-1 overflow-hidden pl-[15px]">
    <table className="w-[574px] table-fixed border-separate border-spacing-0 whitespace-nowrap text-left text-[#6d6d6d]">
      <colgroup>
        <col className="w-[257px]" />
        <col className="w-[120px]" />
        <col className="w-[120px]" />
        <col />
      </colgroup>
      <thead>
        <tr className="h-[31px] text-[#4c607a]">
          <th className="p-0 pb-[5px] pl-[3px] font-normal">
            <div className="flex flex-col">
              <svg width="6" height="3" viewBox="0 0 6 3" className="self-center"><path d="M0 3h6L3 0z" fill="#5a8cab" /></svg>
              <span className="h-5 leading-5">Имя</span>
            </div>
          </th>
          <th className="border-l border-[#e3eefa] p-0 pb-1.5 pl-1.5 font-normal">Дата изменения</th>
          <th className="border-l border-[#e3eefa] p-0 pb-1.5 pl-1.5 font-normal">Тип</th>
          <th className="border-l border-[#e3eefa] p-0 pb-1.5 pl-1.5 font-normal">Размер</th>
        </tr>
      </thead>
      <tbody>
        {localFiles.map((f, i) => (
          <tr key={f.name} className={rowClass(i)}>
            <td className={clsx('h-[21px] border-t p-0', i < 7 ? 'border-l pl-[3px]' : 'pl-1')}>
              <div className="flex h-5 items-center gap-1">
                <KindIcon kind={f.icon} />
                <span className="text-black">{f.name}</span>
              </div>
            </td>
            <td className="border-t p-0 pl-[7px]">{f.date}</td>
            <td className="border-t p-0 pl-[7px]">{f.type}</td>
            <td className={clsx('border-t p-0 pr-1 text-right', i < 7 && 'border-r')}>{f.size}</td>
          </tr>
        ))}
      </tbody>
    </table>
  </div>
);

const Explorer = () => (
  <div className="absolute left-[11px] top-[3px] w-[800px] border border-[#417d92] bg-[#5ba3ba] px-1.5 pb-1.5 font-['Open_Sans',sans-serif] text-[11px] leading-4 text-black">
    <TitleBar />
    <div className="border border-[#4a8598] bg-white">
      <div className="flex h-6 border-b border-[#dadbdc] text-[#333]">
        <button type="button" className="w-14 bg-[#1979ca] text-white">Файл</button>
        <button type="button" className="-mb-px w-[70px] border-r border-[#dadbdc] bg-[#f4f6f9]">Главная</button>
        <button type="button" className="w-[106px]">Общий доступ</button>
        <button type="button" className="w-[51px]">Вид</button>
        <div className="ml-auto flex items-center gap-2.5 pr-1">
          <Chevron dir="up" light />
          <svg width="14" height="14" viewBox="0 0 14 14">
            <circle cx="7" cy="7" r="7" fill="#1979ca" />
            <path d="M5 5.500c0-2.700 4.200-2.500 4.200 0 0 1.600-2.200 1.500-2.200 3.200M7 10v1.600" stroke="#fff" strokeWidth="1.500" fill="none" />
          </svg>
        </div>
      </div>
      <Ribbon />
      <AddressRow />
      <div className="flex h-[385px] border-t border-[#b3b3b3]">
        <Sidebar />
        <FileTable />
        <VScroll thumb="h-[328px]" />
      </div>
      <div className="flex h-[23px] items-center pl-3.5 text-[#1e395b]">
        <span className="border-r border-[#e8e8e8] pr-2.5">Элементов: 18</span>
        <span className="border-r border-[#e8e8e8] px-2.5">Выбрано 7 элем.</span>
        <button type="button" aria-label="Таблица" className="ml-auto flex h-[23px] w-[22px] items-center justify-center border border-[#26a0da] bg-[#cbe8f6]">
          <svg width="16" height="13" viewBox="0 0 16 13">
            <path d="M1 1h3v3H1zM1 5h3v3H1zM1 9h3v3H1z" fill="#fff" stroke="#555" strokeWidth=".8" />
            <path d="M6 2.500h4M11 2.500h4M6 6.500h4M11 6.500h4M6 10.500h4M11 10.500h4" stroke="#4a6a7c" />
          </svg>
        </button>
        <button type="button" aria-label="Крупные значки" className="mr-1 flex w-[22px] justify-center">
          <svg width="14" height="12" viewBox="0 0 14 12">
            <rect x=".5" y=".5" width="13" height="11" fill="#fff" stroke="#7c8a98" />
            <rect x="2" y="2" width="10" height="8" fill="#6fb8e6" />
            <path d="M2 5q5 0 10 4v1H2z" fill="#23796a" />
          </svg>
        </button>
      </div>
    </div>
  </div>
);

const Arrow = () => (
  <svg
    className="pointer-events-none absolute left-[225px] top-[245px] drop-shadow-[0_2px_1px_rgba(0,0,0,0.35)]"
    width="680"
    height="360"
    viewBox="225 245 680 360"
  >
    <path
      d="M236 251.500L864 549L869 530Q871 526 876 529L897 575Q899 580 892 583L842 597Q835 596 838 592L851 575L232 260Q227 256 230 253Q232 250 236 251.500Z"
      fill="#e53b2f"
    />
  </svg>
);

const App: React.FC = () => (
  <main className="relative min-h-screen w-full overflow-hidden bg-black">
    <Wallpaper />
    <div className="absolute bottom-0 right-0 h-20 w-4 border-l-2 border-r-[7px] border-white bg-[#c0c0c0]" />
    <BrowserPage />
    <FtpClient />
    <Explorer />
    <Arrow />
  </main>
);

export default App;
